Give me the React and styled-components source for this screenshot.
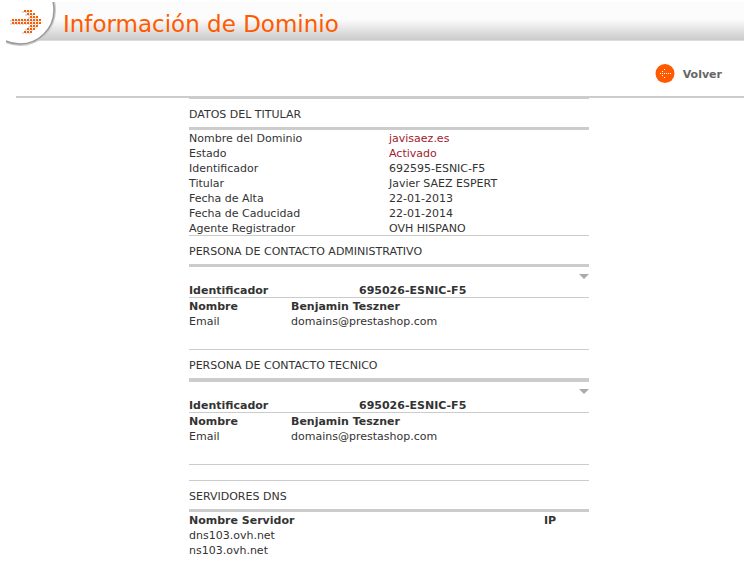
import styled, { createGlobalStyle } from 'styled-components';

const GlobalStyle = createGlobalStyle`
  body {
    margin: 0;
    background: #fff;
    color: #333;
    font-family: Verdana, 'DejaVu Sans', sans-serif;
    font-size: 11px;
    line-height: 15px;
  }
`;

const Header = styled.header`
  display: flex;
  margin-top: 2px;
  margin-left: 6px;
  height: 38px;
  border-bottom: 1px solid #ddd;
  background: linear-gradient(#fcfcfc 0, #fcfcfc 45%, #cbcbcb 100%);
`;

const Logo = styled.svg`
  flex: none;
  width: 56px;
  height: 46px;
`;

const Title = styled.h1`
  margin: 0;
  padding-left: 1px;
  color: #ff5a00;
  font-size: 23px;
  font-weight: 400;
  line-height: 44px;
  white-space: nowrap;
`;

const Toolbar = styled.nav`
  display: flex;
  justify-content: flex-end;
  margin-left: 16px;
  padding: 23px 22px 12px 0;
  border-bottom: 2px solid #ccc;
`;

const BackLink = styled.a`
  display: flex;
  align-items: center;
  gap: 8px;
  height: 20px;
  color: #666;
  font-weight: 700;
  text-decoration: none;
`;

const Content = styled.main`
  width: 400px;
  max-width: 100%;
  margin: 0 auto;
  padding-left: 34px;
`;

const Section = styled.section`
  border-top: 1px solid #ccc;
`;

const SectionTitle = styled.h2`
  margin: 0;
  padding: 8px 0 5px;
  border-bottom: ${({ $thick }) => ($thick ? 4 : 3)}px solid #ccc;
  font-size: 11px;
  font-weight: 400;
`;

const Table = styled.table`
  width: 100%;
  border-collapse: collapse;
  table-layout: fixed;
  th,
  td {
    padding: 2px 0 0;
    line-height: 13px;
    text-align: left;
    font-weight: ${({ $bold }) => ($bold ? 700 : 400)};
  }
  thead th {
    font-weight: 700;
  }
`;

const Label = styled.th`
  width: ${({ $width }) => $width}px;
`;

const Value = styled.td`
  color: ${({ $accent }) => ($accent ? '#a31a30' : 'inherit')};
`;

const Toggle = styled.button`
  display: flex;
  justify-content: flex-end;
  width: 100%;
  height: 15px;
  padding: 7px 0 0;
  border: 0;
  background: none;
`;

const Person = styled.div`
  padding-bottom: 21px;
  border-top: 1px solid #ccc;
`;

const Spacer = styled.div`
  height: 15px;
  border-top: 1px solid #ccc;
`;

const holder = [
  ['Nombre del Dominio', 'javisaez.es', true],
  ['Estado', 'Activado', true],
  ['Identificador', '692595-ESNIC-F5'],
  ['Titular', 'Javier SAEZ ESPERT'],
  ['Fecha de Alta', '22-01-2013'],
  ['Fecha de Caducidad', '22-01-2014'],
  ['Agente Registrador', 'OVH HISPANO'],
];

const servers = ['dns103.ovh.net', 'ns103.ovh.net'];

// [first column, number of dots] for each row of the arrow
const arrowRows = [
  [4, 3],
  [5, 3],
  [6, 3],
  [0, 10],
  [0, 10],
  [6, 3],
  [5, 3],
  [4, 3],
];

const arrowDots = arrowRows.flatMap(([start, count], row) =>
  Array.from({ length: count }, (_, i) => [6 + (start + i) * 3, 8 + row * 3])
);

const backDots = [
  [9, 5], [7, 7], [7, 11], [9, 13],
  [5, 9], [7, 9], [9, 9], [11, 9], [13, 9], [15, 9],
];

function ArrowLogo() {
  return (
    <Logo viewBox='0 0 56 46' aria-hidden='true'>
      <circle cx='14' cy='8' r='34' fill='#fff' />
      <circle cx='14' cy='8' r='35' fill='none' stroke='#ccc' strokeWidth='2' />
      <circle cx='14' cy='8' r='34' fill='none' stroke='#999' strokeWidth='1.5' />
      {arrowDots.map(([x, y]) => (
        <rect key={`s${x}-${y}`} x={x - 2} y={y + 1} width='2' height='2' fill='#ddd' />
      ))}
      {arrowDots.map(([x, y]) => (
        <rect key={`${x}-${y}`} x={x} y={y} width='2' height='2' fill='#ff5a00' />
      ))}
    </Logo>
  );
}

function BackIcon() {
  return (
    <svg width='20' height='20' viewBox='0 0 20 20' aria-hidden='true'>
      <circle cx='10' cy='9.5' r='9.5' fill='#ff5a00' />
      {backDots.map(([x, y]) => (
        <rect key={`${x}-${y}`} x={x} y={y} width='1' height='1' fill='#fff' />
      ))}
    </svg>
  );
}

function Contact({ title, thick }) {
  return (
    <Section>
      <SectionTitle $thick={thick}>{title}</SectionTitle>
      <Toggle type='button' aria-label='Desplegar'>
        <svg width='10' height='5' viewBox='0 0 10 5' aria-hidden='true'>
          <path d='M0 0H10L5 5Z' fill='#aaa' />
        </svg>
      </Toggle>
      <Table $bold>
        <tbody>
          <tr>
            <Label $width={170} scope='row'>Identificador</Label>
            <Value>695026-ESNIC-F5</Value>
          </tr>
        </tbody>
      </Table>
      <Person>
        <Table>
          <thead>
            <tr>
              <Label $width={102}>Nombre</Label>
              <th>Benjamin Teszner</th>
            </tr>
          </thead>
          <tbody>
            <tr>
              <td>Email</td>
              <Value>domains@prestashop.com</Value>
            </tr>
          </tbody>
        </Table>
      </Person>
    </Section>
  );
}

function App() {
  return (
    <>
      <GlobalStyle />
      <Header>
        <ArrowLogo />
        <Title>Información de Dominio</Title>
      </Header>
      <Toolbar>
        <BackLink href='#'>
          <BackIcon />
          Volver
        </BackLink>
      </Toolbar>
      <Content>
        <Section>
          <SectionTitle>DATOS DEL TITULAR</SectionTitle>
          <Table>
            <tbody>
              {holder.map(([label, value, accent]) => (
                <tr key={label}>
                  <Label $width={200} scope='row'>{label}</Label>
                  <Value $accent={accent}>{value}</Value>
                </tr>
              ))}
            </tbody>
          </Table>
        </Section>
        <Contact title='PERSONA DE CONTACTO ADMINISTRATIVO' />
        <Contact title='PERSONA DE CONTACTO TECNICO' thick />
        <Spacer />
        <Section>
          <SectionTitle>SERVIDORES DNS</SectionTitle>
          <Table>
            <thead>
              <tr>
                <Label $width={355}>Nombre Servidor</Label>
                <th>IP</th>
              </tr>
            </thead>
            <tbody>
              {servers.map((server) => (
                <tr key={server}>
                  <td>{server}</td>
                  <td />
                </tr>
              ))}
            </tbody>
          </Table>
        </Section>
      </Content>
    </>
  );
}

export default App;
